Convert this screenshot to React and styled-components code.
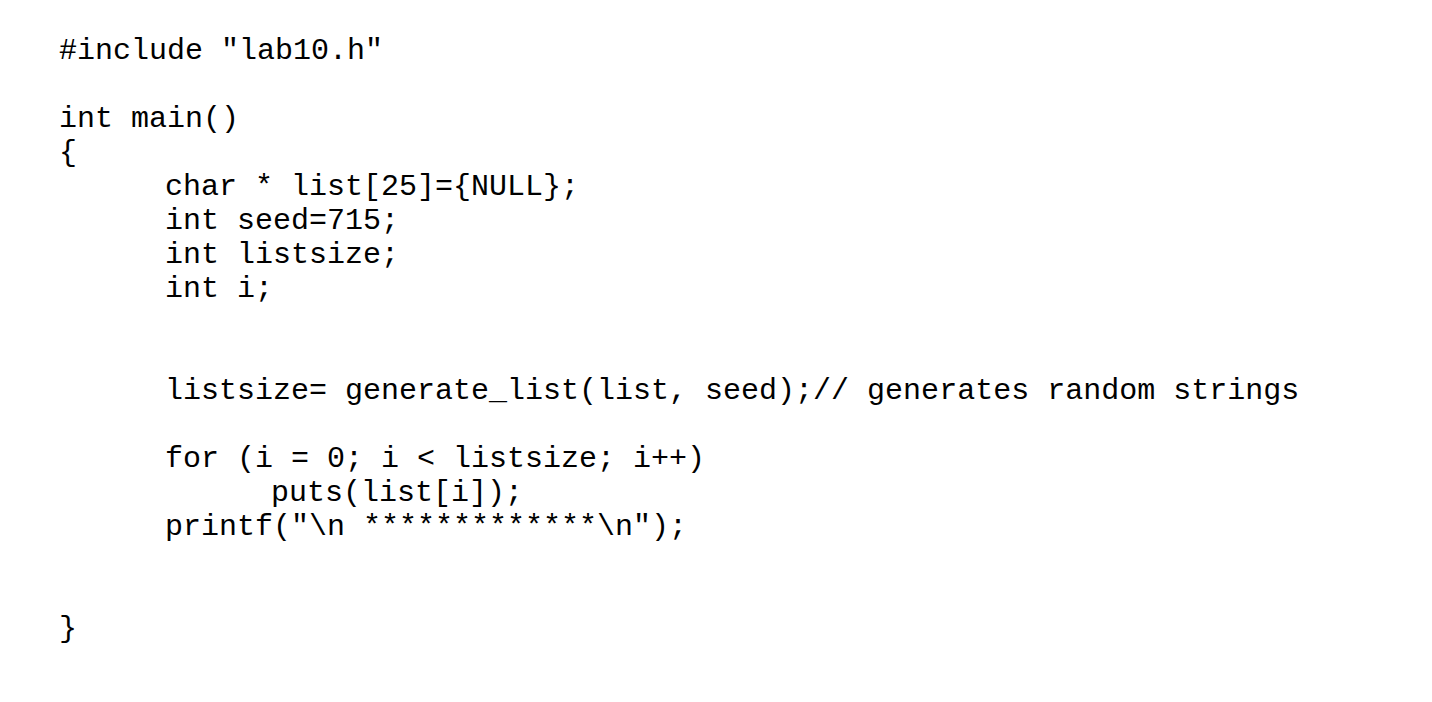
import styled, { createGlobalStyle } from "styled-components";

const GlobalStyle = createGlobalStyle`
  html, body {
    margin: 0;
    padding: 0;
    background: #ffffff;
  }
`;

const Page = styled.div`
  width: 1432px;
  height: 702px;
  background: #ffffff;
  padding: 34px 0 0 59px;
  box-sizing: border-box;
`;

const Code = styled.pre`
  margin: 0;
  font-family: "Liberation Mono", "DejaVu Sans Mono", monospace;
  font-size: 30px;
  line-height: 34px;
  color: #000000;
  tab-size: 106px;
  white-space: pre;
`;

const source = `#include "lab10.h"

int main()
{
\tchar * list[25]={NULL};
\tint seed=715;
\tint listsize;
\tint i;


\tlistsize= generate_list(list, seed);// generates random strings

\tfor (i = 0; i < listsize; i++)
\t\tputs(list[i]);
\tprintf("\\n *************\\n");


}`;

const App = () => {
  return (
    <>
      <GlobalStyle />
      <Page>
        <Code>{source}</Code>
      </Page>
    </>
  );
};

export default App;
